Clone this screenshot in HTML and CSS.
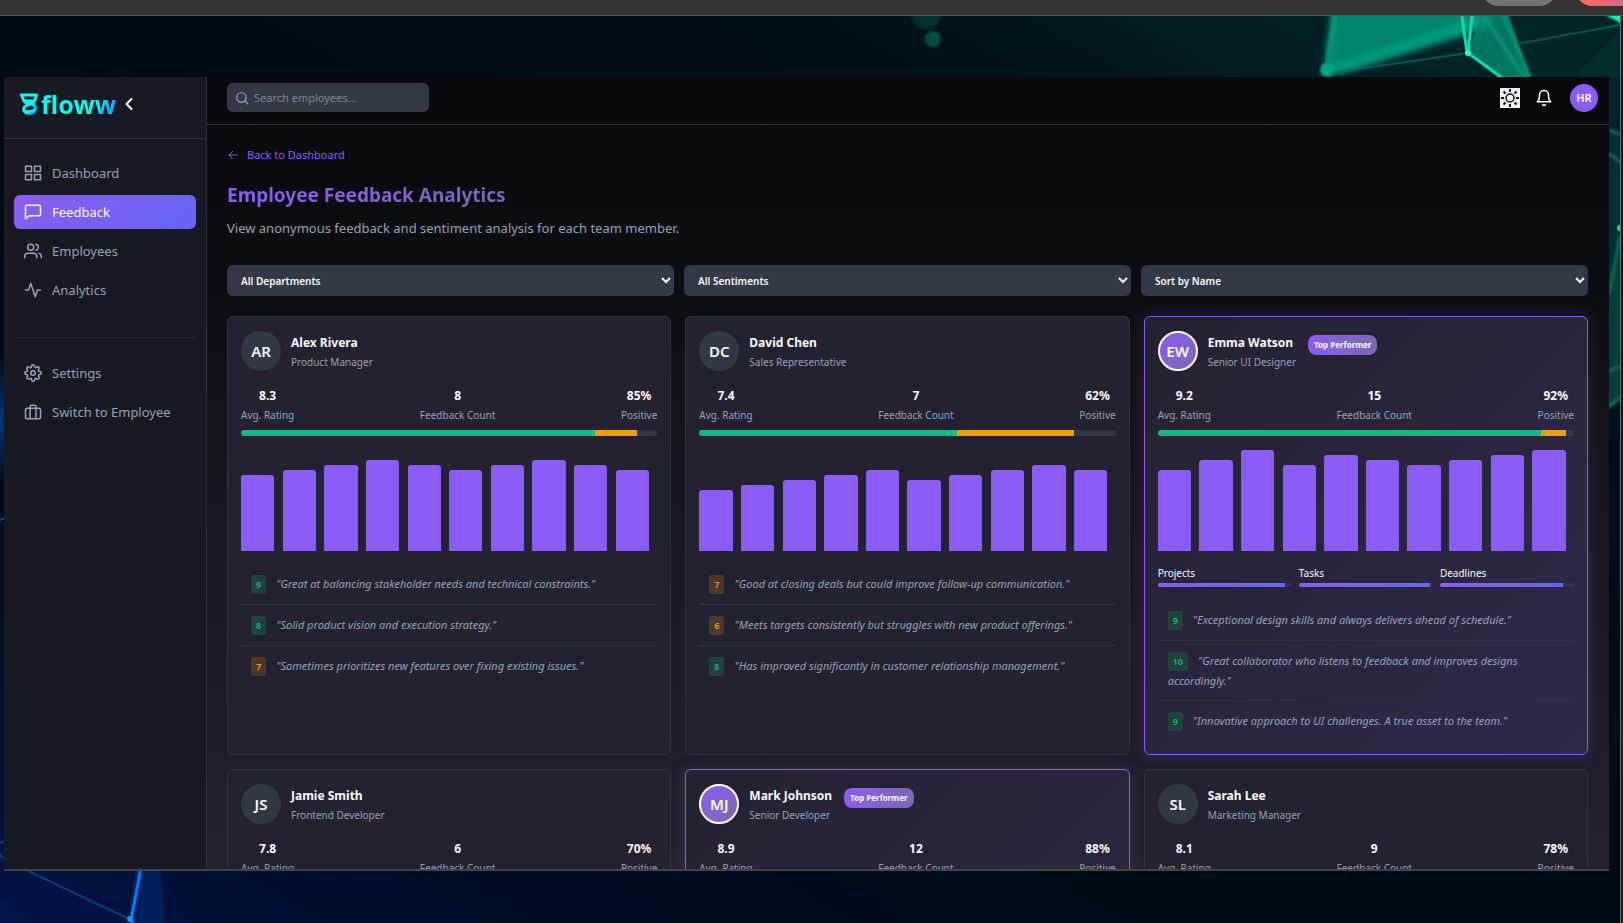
FILE: index.html
```html
<!DOCTYPE html>
<html lang="en">
<head>
<meta charset="utf-8">
<meta name="viewport" content="width=device-width, initial-scale=1">
<title>floww – Employee Feedback Analytics</title>
<link rel="stylesheet" href="styles.css">
</head>
<body>
<div class="titlebar">
  <button class="title-pill" type="button" aria-label="Options"></button>
  <button class="title-pill title-pill-accent" type="button" aria-label="Share"></button>
</div>
<div class="desktop">
  <svg class="wallpaper" viewBox="0 16 1620 907" preserveAspectRatio="xMidYMid slice" aria-hidden="true">
    <defs>
      <linearGradient id="sky" x1="0" y1="1" x2="1" y2="0">
        <stop offset="0" stop-color="#001446"/>
        <stop offset=".16" stop-color="#000d26"/>
        <stop offset=".4" stop-color="#000a14"/>
        <stop offset=".75" stop-color="#00101a"/>
        <stop offset="1" stop-color="#002a2c"/>
      </linearGradient>
      <radialGradient id="blue"><stop offset="0" stop-color="#003a78"/><stop offset="1" stop-color="#003a78" stop-opacity="0"/></radialGradient>
      <filter id="b1"><feGaussianBlur stdDeviation="1"/></filter>
      <filter id="b3" x="-20%" y="-20%" width="140%" height="140%"><feGaussianBlur stdDeviation="3"/></filter>
    </defs>
    <rect y="16" width="1620" height="907" fill="url(#sky)"/>
    <ellipse cx="0" cy="420" rx="40" ry="60" fill="url(#blue)"/>
    <path d="M135 871H160L165 923H128Z" fill="#00245c" filter="url(#b1)"/>
    <path d="M28 871L131 920" stroke="#003c8a" stroke-width="2"/>
    <path d="M141 868L131 920L134 925" stroke="#0080f8" stroke-width="3" fill="none"/>
    <circle cx="130" cy="919" r="3" fill="#1894ff"/>
    <path d="M0 843L6 841M0 855L6 860M0 520L6 518" stroke="#0048a0" stroke-width="2"/>
    <circle cx="926" cy="14" r="15" fill="#00302e" filter="url(#b1)"/>
    <circle cx="933" cy="39" r="8" fill="#00503f" filter="url(#b1)"/>
    <path d="M1480 16H1509L1530 77H1500L1468 53Z" fill="#007662"/>
    <path d="M1510 16H1620V77H1534Z" fill="#002527"/>
    <path d="M1331 10H1494L1490 28L1340 74L1324 70Z" fill="#008470" filter="url(#b3)"/>
    <path d="M1326 70L1336 14" stroke="#00a083" stroke-width="7" filter="url(#b1)" opacity=".6"/>
    <path d="M1326 71L1482 20" stroke="#009c80" stroke-width="9" filter="url(#b3)"/>
    <circle cx="1327" cy="70" r="7" fill="#00a586" filter="url(#b1)"/>
    <path d="M1330 73L1468 53L1620 25" stroke="#00705f" fill="none" stroke-width="2" opacity=".7"/>
    <path d="M1484 16L1524 77M1504 16L1530 77" stroke="#00a080" stroke-width="4" filter="url(#b1)" opacity=".7"/>
    <path d="M1462 16L1467 53M1472 16L1468 53L1502 78" stroke="#00e0ac" stroke-width="3" fill="none"/>
    <circle cx="1468" cy="53" r="3" fill="#20ffd0"/>
    <path d="M1604 14L1622 24V14Z" fill="#00ffc0" filter="url(#b1)"/>
    <path d="M1620 30L1575 77H1620Z" fill="#002e2e"/>
    <path d="M1609 130V300L1620 230V140Z" fill="#003034"/>
    <path d="M1609 300L1620 232V400L1609 410Z" fill="#00403c"/>
    <path d="M1606 129L1622 135M1606 152L1622 163M1606 372L1622 366M1606 408L1622 396M1609 294L1620 236" stroke="#006e5c" stroke-width="3" filter="url(#b1)"/>
    <circle cx="1620" cy="228" r="3" fill="#00e8b0"/>
  </svg>

  <div class="app">
    <aside class="sidebar">
      <div class="brand">
        <svg class="brand-mark" viewBox="0 0 18 22" width="18" height="22" aria-hidden="true">
          <defs><linearGradient id="mark" x1="0" y1="0" x2="1" y2="1"><stop offset=".55" stop-color="#00fff5"/><stop offset="1" stop-color="#2080ff"/></linearGradient></defs>
          <path d="M1.500 2H16.500L14.500 8H4ZM4 8C5 11 12 9.500 14.500 12.500C17 17 14 20.500 9.500 20.500C5 20.500 2.500 17.500 4.500 14C6 11.500 13 11 14.500 8" fill="none" stroke="url(#mark)" stroke-width="3" stroke-linejoin="round"/>
          <path d="M4 16.500Q9 18.500 15 15.500Q15 20.500 9.500 20.500Q5 20.500 4 16.500Z" fill="url(#mark)"/>
        </svg>
        <span class="brand-name">floww</span>
        <button class="collapse" type="button" aria-label="Collapse sidebar">
          <svg viewBox="0 0 8 14" width="8" height="14" class="line"><path d="M6.500 2L1.500 7L6.500 12"/></svg>
        </button>
      </div>
      <nav class="nav">
        <a class="nav-item" href="#"><svg class="icon" viewBox="0 0 24 24"><rect x="2" y="3" width="8" height="7"/><rect x="14" y="3" width="8" height="7"/><rect x="14" y="14" width="8" height="7"/><rect x="2" y="14" width="8" height="7"/></svg>Dashboard</a>
        <a class="nav-item nav-item-active" href="#" aria-current="page"><svg class="icon" viewBox="0 0 24 24"><path d="M22 15a2 2 0 0 1-2 2H7l-5 4V5a2 2 0 0 1 2-2h16a2 2 0 0 1 2 2z"/></svg>Feedback</a>
        <a class="nav-item" href="#"><svg class="icon" viewBox="0 0 24 24"><path d="M17 21v-2a4 4 0 0 0-4-4H5a4 4 0 0 0-4 4v2"/><circle cx="9" cy="7" r="4"/><path d="M23 21v-2a4 4 0 0 0-3-3.870M16 3.130a4 4 0 0 1 0 7.750"/></svg>Employees</a>
        <a class="nav-item" href="#"><svg class="icon" viewBox="0 0 24 24"><path d="M22 12h-4l-3 9L9 3l-3 9H2"/></svg>Analytics</a>
      </nav>
      <nav class="nav nav-secondary">
        <a class="nav-item" href="#"><svg class="icon" viewBox="0 0 24 24"><circle cx="12" cy="12" r="3"/><path d="M19.400 15a1.650 1.650 0 0 0 .33 1.820l.06.06a2 2 0 1 1-2.830 2.830l-.06-.06a1.650 1.650 0 0 0-2.800 1.170V21a2 2 0 0 1-4 0v-.09A1.650 1.650 0 0 0 7.200 19.700l-.06.06a2 2 0 1 1-2.830-2.830l.06-.06A1.650 1.650 0 0 0 3.100 14H3a2 2 0 0 1 0-4h.09A1.650 1.650 0 0 0 4.300 7.200l-.06-.06a2 2 0 1 1 2.830-2.830l.06.06A1.650 1.650 0 0 0 10 3.090V3a2 2 0 0 1 4 0v.09a1.650 1.650 0 0 0 2.800 1.170l.06-.06a2 2 0 1 1 2.830 2.830l-.06.06A1.650 1.650 0 0 0 20.900 10H21a2 2 0 0 1 0 4h-.09a1.650 1.650 0 0 0-1.510 1z"/></svg>Settings</a>
        <a class="nav-item" href="#"><svg class="icon" viewBox="0 0 24 24"><rect x="2" y="7" width="20" height="14" rx="2"/><path d="M16 21V5a2 2 0 0 0-2-2h-4a2 2 0 0 0-2 2v16"/></svg>Switch to Employee</a>
      </nav>
    </aside>

    <div class="page">
      <header class="topbar">
        <label class="search">
          <svg class="search-icon" viewBox="0 0 24 24" aria-hidden="true"><circle cx="11" cy="11" r="8"/><path d="M22 22l-5-5"/></svg>
          <input class="search-input" type="text" placeholder="Search employees..." aria-label="Search employees">
        </label>
        <div class="actions">
          <button class="theme" type="button" aria-label="Toggle theme">
            <svg viewBox="0 0 20 20" width="20" height="20" fill="none" stroke="#111" stroke-width="2"><circle cx="10" cy="10" r="4" stroke-width="1.500"/><path d="M10 1V4M10 16V19M1 10H4M16 10H19M3.500 3.500L5.500 5.500M14.500 14.500L16.500 16.500M3.500 16.500L5.500 14.500M14.500 5.500L16.500 3.500"/></svg>
          </button>
          <button class="bell" type="button" aria-label="Notifications">
            <svg class="line" viewBox="0 0 24 24" width="18" height="18"><path d="M18 8A6 6 0 0 0 6 8c0 7-3 9-3 9h18s-3-2-3-9M13.700 21a2 2 0 0 1-3.400 0"/></svg>
          </button>
          <button class="profile" type="button">HR</button>
        </div>
      </header>

      <main class="content">
        <a class="back" href="#"><svg class="back-icon" viewBox="0 0 24 24" aria-hidden="true"><path d="M21 12H4M11 19l-7-7 7-7"/></svg>Back to Dashboard</a>
        <h1 class="title">Employee Feedback Analytics</h1>
        <p class="subtitle">View anonymous feedback and sentiment analysis for each team member.</p>

        <div class="filters">
          <select class="filter" aria-label="Department"><option>All Departments</option></select>
          <select class="filter" aria-label="Sentiment"><option>All Sentiments</option></select>
          <select class="filter" aria-label="Sort order"><option>Sort by Name</option></select>
        </div>

        <div class="cards">
          <article class="card">
            <div class="person"><div class="avatar">AR</div><div><h2 class="name">Alex Rivera</h2><p class="role">Product Manager</p></div></div>
            <div class="stats">
              <div class="stat"><strong class="value">8.3</strong><span class="label">Avg. Rating</span></div>
              <div class="stat"><strong class="value">8</strong><span class="label">Feedback Count</span></div>
              <div class="stat"><strong class="value">85%</strong><span class="label">Positive</span></div>
            </div>
            <div class="sentiment"><span class="positive" style="width:85%"></span><span class="neutral" style="width:10%"></span></div>
            <div class="chart"><span style="height:75%"></span><span style="height:80%"></span><span style="height:85%"></span><span style="height:90%"></span><span style="height:85%"></span><span style="height:80%"></span><span style="height:85%"></span><span style="height:90%"></span><span style="height:85%"></span><span style="height:80%"></span></div>
            <ul class="comments">
              <li class="comment"><span class="score">9</span>"Great at balancing stakeholder needs and technical constraints."</li>
              <li class="comment"><span class="score">8</span>"Solid product vision and execution strategy."</li>
              <li class="comment"><span class="score score-mid">7</span>"Sometimes prioritizes new features over fixing existing issues."</li>
            </ul>
          </article>

          <article class="card">
            <div class="person"><div class="avatar">DC</div><div><h2 class="name">David Chen</h2><p class="role">Sales Representative</p></div></div>
            <div class="stats">
              <div class="stat"><strong class="value">7.4</strong><span class="label">Avg. Rating</span></div>
              <div class="stat"><strong class="value">7</strong><span class="label">Feedback Count</span></div>
              <div class="stat"><strong class="value">62%</strong><span class="label">Positive</span></div>
            </div>
            <div class="sentiment"><span class="positive" style="width:62%"></span><span class="neutral" style="width:28%"></span></div>
            <div class="chart"><span style="height:60%"></span><span style="height:65%"></span><span style="height:70%"></span><span style="height:75%"></span><span style="height:80%"></span><span style="height:70%"></span><span style="height:75%"></span><span style="height:80%"></span><span style="height:85%"></span><span style="height:80%"></span></div>
            <ul class="comments">
              <li class="comment"><span class="score score-mid">7</span>"Good at closing deals but could improve follow-up communication."</li>
              <li class="comment"><span class="score score-mid">6</span>"Meets targets consistently but struggles with new product offerings."</li>
              <li class="comment"><span class="score">8</span>"Has improved significantly in customer relationship management."</li>
            </ul>
          </article>

          <article class="card card-top">
            <div class="person"><div class="avatar avatar-top">EW</div><div><h2 class="name">Emma Watson</h2><p class="role">Senior UI Designer</p></div><span class="badge">Top Performer</span></div>
            <div class="stats">
              <div class="stat"><strong class="value">9.2</strong><span class="label">Avg. Rating</span></div>
              <div class="stat"><strong class="value">15</strong><span class="label">Feedback Count</span></div>
              <div class="stat"><strong class="value">92%</strong><span class="label">Positive</span></div>
            </div>
            <div class="sentiment"><span class="positive" style="width:92%"></span><span class="neutral" style="width:6%"></span></div>
            <div class="chart"><span style="height:80%"></span><span style="height:90%"></span><span style="height:100%"></span><span style="height:85%"></span><span style="height:95%"></span><span style="height:90%"></span><span style="height:85%"></span><span style="height:90%"></span><span style="height:95%"></span><span style="height:100%"></span></div>
            <div class="metrics">
              <div class="metric">Projects<div class="track"><div class="fill" style="width:95%"></div></div></div>
              <div class="metric">Tasks<div class="track"><div class="fill" style="width:98%"></div></div></div>
              <div class="metric">Deadlines<div class="track"><div class="fill" style="width:92%"></div></div></div>
            </div>
            <ul class="comments">
              <li class="comment"><span class="score">9</span>"Exceptional design skills and always delivers ahead of schedule."</li>
              <li class="comment"><span class="score">10</span>"Great collaborator who listens to feedback and improves designs accordingly."</li>
              <li class="comment"><span class="score">9</span>"Innovative approach to UI challenges. A true asset to the team."</li>
            </ul>
          </article>

          <article class="card">
            <div class="person"><div class="avatar">JS</div><div><h2 class="name">Jamie Smith</h2><p class="role">Frontend Developer</p></div></div>
            <div class="stats">
              <div class="stat"><strong class="value">7.8</strong><span class="label">Avg. Rating</span></div>
              <div class="stat"><strong class="value">6</strong><span class="label">Feedback Count</span></div>
              <div class="stat"><strong class="value">70%</strong><span class="label">Positive</span></div>
            </div>
          </article>

          <article class="card card-top">
            <div class="person"><div class="avatar avatar-top">MJ</div><div><h2 class="name">Mark Johnson</h2><p class="role">Senior Developer</p></div><span class="badge">Top Performer</span></div>
            <div class="stats">
              <div class="stat"><strong class="value">8.9</strong><span class="label">Avg. Rating</span></div>
              <div class="stat"><strong class="value">12</strong><span class="label">Feedback Count</span></div>
              <div class="stat"><strong class="value">88%</strong><span class="label">Positive</span></div>
            </div>
          </article>

          <article class="card">
            <div class="person"><div class="avatar">SL</div><div><h2 class="name">Sarah Lee</h2><p class="role">Marketing Manager</p></div></div>
            <div class="stats">
              <div class="stat"><strong class="value">8.1</strong><span class="label">Avg. Rating</span></div>
              <div class="stat"><strong class="value">9</strong><span class="label">Feedback Count</span></div>
              <div class="stat"><strong class="value">78%</strong><span class="label">Positive</span></div>
            </div>
          </article>
        </div>
      </main>
    </div>
  </div>
</div>
</body>
</html>
```
FILE: styles.css
```css
:root {
  --accent: #8b5cf6;
  --line: #2e3644;
  --field: #333947;
  --muted: #94a3b8;
  --text: #f8fafc;
  --green: #10b981;
  --amber: #f59e0b;
}

* { box-sizing: border-box; }

body {
  margin: 0;
  height: 100vh;
  display: flex;
  flex-direction: column;
  overflow: hidden;
  background: #1a1a1a;
  color: var(--text);
  font-family: "Noto Sans", "Open Sans", sans-serif;
  font-size: 13px;
}

h1, h2, p, ul { margin: 0; padding: 0; }
button { border: 0; padding: 0; font: inherit; color: inherit; background: none; }
a { text-decoration: none; }

/* Window frame */
.titlebar {
  flex: none;
  height: 16px;
  display: flex;
  justify-content: flex-end;
  align-items: flex-end;
  gap: 20px;
  overflow: hidden;
  padding-bottom: 9px;
  background: #333;
  border-bottom: 1px solid #5a5a5a;
}
.title-pill { flex: none; width: 74px; height: 32px; border-radius: 16px; background: #737373; }
.title-pill-accent { width: 92px; margin-right: -45px; background: linear-gradient(90deg, #ff6b57, #b070b0); }

.desktop {
  position: relative;
  flex: 1;
  min-height: 0;
  display: flex;
  margin-right: 2px;
  padding: 61px 11px 52px 4px;
  border-right: 1px solid #6a6a6a;
}
.wallpaper { position: absolute; inset: 0; width: 100%; height: 100%; }

.app {
  position: relative;
  flex: 1;
  min-width: 0;
  display: flex;
  overflow: hidden;
  border-bottom: 2px solid #444;
  background: linear-gradient(#08090c, #0e0f14 30%, #1a1922 62%, #25222f);
}

/* Sidebar */
.sidebar { flex: none; width: 203px; background: #171a21; border-right: 1px solid var(--line); }
.brand {
  display: flex;
  align-items: center;
  height: 62px;
  padding: 0 16px 7px;
  border-bottom: 1px solid var(--line);
}
.brand-name {
  margin-left: 3px;
  font-size: 25px;
  line-height: 34px;
  font-weight: 700;
  color: transparent;
  background: linear-gradient(120deg, #00fff5 65%, #2080ff);
  -webkit-background-clip: text;
  background-clip: text;
}
.collapse { display: flex; margin-left: 9px; }
.line { fill: none; stroke: #fff; stroke-width: 2; stroke-linecap: round; stroke-linejoin: round; }

.nav { display: flex; flex-direction: column; gap: 5px; margin: 0 10px; padding-top: 17px; }
.nav-secondary { margin-top: 30px; padding-top: 18px; border-top: 1px solid #242934; }
.nav-item {
  display: flex;
  align-items: center;
  gap: 10px;
  height: 34px;
  padding: 0 10px;
  border-radius: 6px;
  color: var(--muted);
}
.nav-item-active { color: #fff; background: linear-gradient(135deg, #8b5cf6, #6366f1); }
.icon { width: 18px; height: 18px; fill: none; stroke: currentColor; stroke-width: 2; stroke-linecap: round; stroke-linejoin: round; }

/* Top bar */
.page { flex: 1; min-width: 0; }
.topbar {
  display: flex;
  align-items: center;
  justify-content: space-between;
  height: 48px;
  padding: 6px 11px 12px 20px;
  border-bottom: 1px solid var(--line);
}
.search {
  display: flex;
  align-items: center;
  gap: 5px;
  width: 202px;
  height: 29px;
  padding: 0 8px;
  border-radius: 6px;
  background: var(--field);
}
.search-icon { flex: none; width: 14px; height: 14px; fill: none; stroke: #a3afc0; stroke-width: 2; stroke-linecap: round; }
.search-input { flex: 1; min-width: 0; border: 0; padding: 0; outline: 0; background: none; color: var(--text); font: inherit; font-size: 11px; }
.search-input::placeholder { color: #7f858d; }
.actions { display: flex; align-items: center; }
.theme { display: flex; width: 20px; height: 20px; background: #f0f0f0; }
.bell { display: flex; margin: 0 17px 0 15px; }
.profile { width: 28px; height: 28px; border-radius: 50%; background: var(--accent); font-size: 11px; font-weight: 600; text-align: center; }

/* Page heading */
.content { padding: 21px 21px 20px 20px; }
.back { display: flex; align-items: center; gap: 8px; font-size: 11px; line-height: 18px; color: var(--accent); }
.back-icon { width: 12px; height: 12px; fill: none; stroke: currentColor; stroke-width: 2; stroke-linecap: round; stroke-linejoin: round; }
.title {
  width: fit-content;
  margin-top: 16px;
  font-size: 19px;
  line-height: 30px;
  font-weight: 700;
  color: transparent;
  background: linear-gradient(90deg, #8b5cf6, #7d68ae);
  -webkit-background-clip: text;
  background-clip: text;
}
.subtitle { margin-top: 8px; line-height: 20px; color: var(--muted); }

.filters { display: grid; grid-template-columns: repeat(3, 1fr); gap: 10px; margin-top: 27px; }
.filter {
  height: 31px;
  padding: 0 0 0 10px;
  border: 0;
  border-radius: 6px;
  background-color: var(--field);
  color: var(--text);
  font: 600 10px "Noto Sans", sans-serif;
}

/* Employee cards */
.cards {
  display: grid;
  grid-template-columns: repeat(3, minmax(0, 1fr));
  grid-auto-rows: minmax(438px, auto);
  gap: 14px;
  margin-top: 20px;
}
.card { padding: 14px 13px 13px; border: 1px solid #2e3542; border-radius: 6px; background: #232230; }
.card-top {
  border-color: var(--accent);
  background: linear-gradient(135deg, #232230, #2f294a);
  box-shadow: 0 0 16px rgba(139, 92, 246, .2);
}

.person { display: flex; align-items: center; }
.avatar {
  display: grid;
  place-items: center;
  flex: none;
  width: 40px;
  height: 40px;
  margin-right: 10px;
  border-radius: 50%;
  background: #303845;
  font-size: 15px;
  font-weight: 600;
}
.avatar-top { border: 2px solid #fff; background: linear-gradient(135deg, #8b5cf6, #7d68ae); }
.name { font-size: 12px; line-height: 22px; font-weight: 700; }
.role { font-size: 10px; line-height: 16px; color: var(--muted); }
.badge {
  align-self: flex-start;
  margin: 4px 0 0 12px;
  padding: 0 6px;
  border-radius: 8px;
  background: linear-gradient(90deg, #8b5cf6, #7d68ae);
  font-size: 8px;
  line-height: 20px;
  font-weight: 700;
}

.stats { display: flex; justify-content: space-between; margin-top: 14px; text-align: center; }
.stat { display: flex; flex-direction: column; }
.value { font-size: 12px; line-height: 22px; font-weight: 700; }
.label { font-size: 10px; line-height: 16px; color: var(--muted); }

.sentiment { display: flex; height: 6px; margin-top: 7px; overflow: hidden; border-radius: 3px; background: #303845; }
.positive { background: var(--green); }
.neutral { background: var(--amber); }

.chart { display: grid; grid-template-columns: repeat(10, 1fr); align-items: end; height: 101px; margin-top: 14px; }
.chart span { width: 80%; border-radius: 3px 3px 0 0; background: var(--accent); }

.metrics { display: grid; grid-template-columns: repeat(3, 1fr); gap: 7px; margin-top: 13px; font-size: 10px; line-height: 19px; }
.track { height: 4px; overflow: hidden; border-radius: 2px; background: #303845; }
.fill { height: 100%; background: linear-gradient(90deg, #8b5cf6, #6366f1); }

.comments { margin-top: 13px; list-style: none; }
.comment { padding: 10px; border-bottom: 1px solid #2e3542; color: var(--muted); font-size: 11px; line-height: 19px; font-style: italic; }
.comment:last-child { border-bottom: 0; }
.score {
  margin-right: 10px;
  padding: 3px 5px;
  border-radius: 3px;
  background: #21413f;
  color: var(--green);
  font-size: 9px;
  font-style: normal;
  font-weight: 600;
}
.score-mid { background: #4b382b; color: var(--amber); }
```
